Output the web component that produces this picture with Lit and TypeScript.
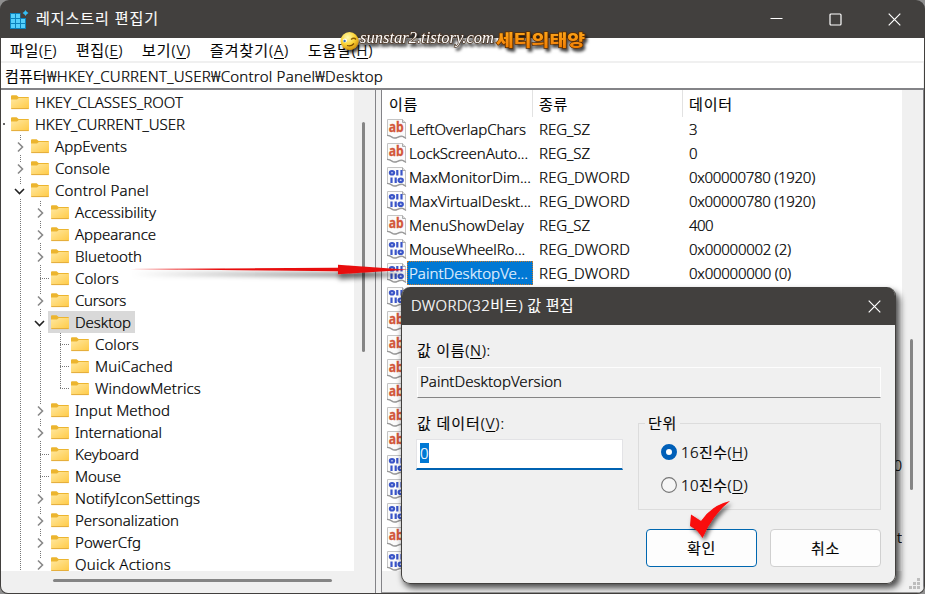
import { LitElement, html, css, svg, nothing } from "lit";
import { customElement } from "lit/decorators.js";

type Node = { name: string; level: number; w: number; state: "closed" | "open" | "leaf"; selected?: boolean };

const tree: Node[] = [
  { name: "HKEY_CLASSES_ROOT", level: 0, w: 148, state: "leaf" },
  { name: "HKEY_CURRENT_USER", level: 0, w: 150, state: "leaf" },
  { name: "AppEvents", level: 1, w: 72, state: "closed" },
  { name: "Console", level: 1, w: 55, state: "closed" },
  { name: "Control Panel", level: 1, w: 94, state: "open" },
  { name: "Accessibility", level: 2, w: 81, state: "closed" },
  { name: "Appearance", level: 2, w: 81, state: "closed" },
  { name: "Bluetooth", level: 2, w: 67, state: "closed" },
  { name: "Colors", level: 2, w: 44, state: "leaf" },
  { name: "Cursors", level: 2, w: 51, state: "closed" },
  { name: "Desktop", level: 2, w: 56, state: "open", selected: true },
  { name: "Colors", level: 3, w: 44, state: "leaf" },
  { name: "MuiCached", level: 3, w: 78, state: "leaf" },
  { name: "WindowMetrics", level: 3, w: 106, state: "leaf" },
  { name: "Input Method", level: 2, w: 95, state: "closed" },
  { name: "International", level: 2, w: 87, state: "closed" },
  { name: "Keyboard", level: 2, w: 64, state: "leaf" },
  { name: "Mouse", level: 2, w: 46, state: "leaf" },
  { name: "NotifyIconSettings", level: 2, w: 125, state: "closed" },
  { name: "Personalization", level: 2, w: 104, state: "closed" },
  { name: "PowerCfg", level: 2, w: 66, state: "closed" },
  { name: "Quick Actions", level: 2, w: 96, state: "closed" },
];

type Value = { name?: string; nw?: number; kind: "sz" | "dword"; data?: string; dw?: number; selected?: boolean; tail?: string };

const values: Value[] = [
  { name: "LeftOverlapChars", nw: 117, kind: "sz", data: "3", dw: 8 },
  { name: "LockScreenAuto...", nw: 119, kind: "sz", data: "0", dw: 8 },
  { name: "MaxMonitorDim...", nw: 122, kind: "dword", data: "0x00000780 (1920)", dw: 126 },
  { name: "MaxVirtualDeskt...", nw: 122, kind: "dword", data: "0x00000780 (1920)", dw: 126 },
  { name: "MenuShowDelay", nw: 115, kind: "sz", data: "400", dw: 24 },
  { name: "MouseWheelRo...", nw: 116, kind: "dword", data: "0x00000002 (2)", dw: 102 },
  { name: "PaintDesktopVe...", nw: 119, kind: "dword", data: "0x00000000 (0)", dw: 102, selected: true },
  { kind: "dword" }, { kind: "sz" }, { kind: "sz" }, { kind: "sz" }, { kind: "sz" }, { kind: "sz" }, { kind: "sz" },
  { kind: "dword", tail: "0" }, { kind: "dword" }, { kind: "dword" }, { kind: "sz", tail: "t" }, { kind: "dword" },
];

const t = (text: string, w: number) => html`<span class="t" data-w=${w}>${text}</span>`;
const key = (text: string, k: string, w: number, end = ")") =>
  html`<span class="t" data-w=${w}>${text}(<u>${k}</u>${end}</span>`;

const folder = html`<svg class="folder" width="18" height="15" viewBox="0 0 18 15">
  <defs><linearGradient id="fg" x1="0" y1="0" x2="1" y2="1"><stop offset="0" stop-color="#ffe8a0"/><stop offset="1" stop-color="#ffca45"/></linearGradient></defs>
  <path d="M0 1.2Q0 .3 1 .3H5.6L7.6 2H17Q18 2 18 3V6H0Z" fill="#ecb52f"/>
  <path d="M0 4.6H6L7.8 3H18V13.2Q18 14 17 14H1Q0 14 0 13.2Z" fill="url(#fg)"/>
  <path d="M0.3 13.6H17.7" stroke="#e3ac3b" stroke-width="1"/></svg>`;

const page = svg`<path d="M.5 .5H15.5L18.5 3.5V19Q15.5 16.500 12.500 18T6.500 18.500L.5 16Z" fill="#fbfbfb" stroke="#c4c4c4"/>
  <path d="M15.500 .5V3.500H18.500" fill="#ddd" stroke="#aaa"/>
  <path d="M0 16.300Q3 16.500 5 18.200T10.500 18.300T15.500 17.300T19 19.400" fill="none" stroke="#999" stroke-width="1.300"/>`;

const icons = {
  sz: html`<svg class="vi" width="20" height="20" viewBox="0 0 20 20">${page}
    <text x="1.800" y="13" textLength="15" lengthAdjust="spacingAndGlyphs" font-family="Noto Sans, sans-serif" font-size="13.500" font-weight="700" fill="#d2573a" stroke="#d2573a" stroke-width=".3">ab</text></svg>`,
  dword: html`<svg class="vi" width="20" height="20" viewBox="0 0 20 20">${page}
    <g fill="none" stroke="#3a55c8" stroke-width="2.200">
      <ellipse cx="5" cy="5.800" rx="2.100" ry="1.700"/><path d="M10.300 3V8.500M14.500 3V8.500"/>
      <path d="M4.500 10.400V16M8.700 10.400V16"/><ellipse cx="13.700" cy="13.200" rx="2.100" ry="1.700"/></g></svg>`,
};

@customElement("app-root")
export class AppRoot extends LitElement {
  static styles = css`
    :host { display: block; width: 925px; height: 594px; overflow: hidden; background: #8f8f8f;
      font: 350 15px/22px "Noto Sans", "Noto Sans CJK KR", sans-serif; color: #000; }
    * { box-sizing: border-box; }
    svg { display: block; flex: none; }
    .t, .tail, .edit span { -webkit-text-stroke: .22px currentColor; }
    .t { white-space: pre; display: inline-block; }
    u { text-decoration: underline; text-underline-offset: 2px; text-decoration-thickness: 1px; }
    .window { position: relative; width: 925px; height: 594px; display: flex; flex-direction: column;
      background: #42403e; border-radius: 9px 9px 8px 8px; overflow: hidden; }
    .title { height: 38px; flex: none; display: flex; align-items: center; color: #fff; padding-left: 9px; }
    .title .t { margin: -2px 0 0 7px; }
    .app-icon { margin-top: 1px; }
    .controls { margin-left: auto; display: flex; gap: 46px; padding-right: 24px; }
    .client { flex: 1; min-height: 0; margin: 0 1px 1px; display: flex; flex-direction: column; background: #f0f0f0;
      border-radius: 0 0 7px 7px; overflow: hidden; }
    .menu { height: 23px; flex: none; background: #fff; display: flex; align-items: center; gap: 19px; padding: 1px 0 0 9px; }
    .address { height: 25px; margin: 2px 1px 0 0; flex: none; background: #fff; padding: 2px 0 0 4px; }
    .panes { flex: 1; min-height: 0; display: flex; border-top: 2px solid #838387; }
    .tree-pane { width: 375px; display: flex; flex-direction: column; border-right: 1px solid #838387; padding-bottom: 1px; }
    .tree-main { height: 481px; display: flex; }
    .tree { width: 353px; height: 481px; overflow: hidden; background: #fff; display: flex; padding-top: 1px; }
    .guides { width: 0; overflow: visible; }
    .nodes { flex: 1; min-width: 0; }
    .node { height: 22px; display: flex; align-items: center; }
    .l0 { padding-left: 7px; } .l1 { padding-left: 27px; } .l2 { padding-left: 47px; } .l3 { padding-left: 67px; }
    .label { display: flex; height: 22px; align-items: center; padding: 0 4px 0 3px; gap: 6px; }
    .label.sel { background: #d9d9d9; }
    .label .folder { margin: 1px 0 0; }
    .vbar { flex: 1; padding: 32px 0 0 8px; }
    .vbar i { display: block; width: 3px; height: 230px; background: #858585; border-radius: 2px; }
    .hbar { padding: 8px 0 0 52px; }
    .hbar i { display: block; width: 279px; height: 3px; background: #858585; border-radius: 2px; }
    .list-pane { flex: 1; margin-left: 5px; border-left: 1px solid #838387; border-right: 1px solid #838387;
      display: flex; border-bottom: 1px solid #9a9a9a; }
    .list { width: 520px; height: 481px; overflow: hidden; background: #fff; }
    .row { display: grid; grid-template-columns: 150px 150px 1fr; height: 24px; line-height: 24px; }
    .row.head { height: 27px; line-height: 28px; }
    .head > span { padding-left: 7px; height: 27px; }
    .head > span + span { border-left: 1px solid #e2e2e2; padding-left: 6px; }
    .name { display: flex; align-items: center; padding-left: 5px; }
    .txt { padding-left: 2px; height: 24px; flex: 1; margin-right: -1px; }
    .txt.sel { background: #0078d4; color: #e6f3ff; outline: 1px dotted #c77a2c; outline-offset: -1px; }
    .type { padding-left: 7px; } .data { padding-left: 7px; }
    .tail { text-align: right; }
    .rbar { flex: 1; padding: 249px 0 0 8px; position: relative; }
    .rbar i { display: block; width: 3px; height: 151px; background: #858585; border-radius: 2px; }
    .grip { position: absolute; right: 2px; bottom: 2px; }

    .dialog { position: absolute; left: 401px; top: 287px; width: 495px; height: 297px; border-radius: 9px;
      background: #f0f0f0; border: 1px solid #42403e; border-top: 0; overflow: hidden; }
    .dlg-shadow { position: absolute; left: 401px; top: 289px; width: 495px; height: 295px; border-radius: 9px;
      box-shadow: 3px 3px 6px 1px #000000b0; }
    .dlg-title { height: 38px; background: #42403e; color: #fff; display: flex; align-items: center; justify-content: space-between; padding: 0 14px 0 9px; }
    .dlg-title .t { margin-top: -2px; }
    .dlg-body { padding: 14px 14px 0 15px; }
    .readonly { height: 31px; margin-top: 6px; border: 1px solid #fdfdfd; border-bottom-color: #858585; padding: 2px 0 0 2px; }
    .cols { display: flex; justify-content: space-between; margin-top: 15px; }
    .edit { width: 207px; height: 31px; margin: 5px 0 0 -1px; background: #fff; border: 1px solid #e3e3e6; border-bottom: 2px solid #0062b1; padding: 3px 0 0 3px; }
    .edit span { display: block; width: 9px; height: 20px; line-height: 20px; background: #0078d4; color: #fff; }
    .group { width: 243px; height: 87px; margin: 10px 0 0; border: 1px solid #dcdcdc; padding: 0 0 0 22px; }
    .legend { display: block; width: 35px; height: 22px; margin: -12px 0 0 -16px; background: #f0f0f0; padding-left: 3px; }
    .radio { display: flex; align-items: center; gap: 4px; height: 22px; margin-top: 7px; }
    .radio .t { margin-top: -1px; }
    .radio + .radio { margin-top: 11px; }
    .buttons { display: flex; justify-content: flex-end; gap: 13px; margin-top: 19px; }
    .edit-label { margin-top: -1px; }
    .btn { width: 111px; height: 38px; border: 1px solid #d0d0d0; border-radius: 4px; background: #fdfdfd; text-align: center; line-height: 36px; }
    .btn.primary { border-color: #0067b0; }

    .arrow { position: absolute; left: 125px; top: 255px; }
    .check { position: absolute; left: 682px; top: 494px; }
    .mark { position: absolute; left: 338px; top: 28px; }
  `;

  firstUpdated() {
    this.renderRoot.querySelectorAll<HTMLElement>(".t").forEach((el) => {
      const n = (el.textContent ?? "").length;
      const natural = el.getBoundingClientRect().width;
      const want = Number(el.dataset.w);
      el.style.letterSpacing = `${((want - natural) / n).toFixed(3)}px`;
    });
  }

  private chevron(x: number, y: number, open: boolean) {
    return svg`<rect x=${x - 6} y=${y - 7} width="12" height="14" fill="#fff"/>
      <path d=${open ? `M${x - 4.5} ${y - 2}L${x} ${y + 2.5}L${x + 4.5} ${y - 2}` : `M${x - 2} ${y - 4.5}L${x + 2.5} ${y}L${x - 2} ${y + 4.5}`}
        fill="none" stroke=${open ? "#222" : "#888"} stroke-width="1.600"/>`;
  }

  private guides() {
    const v = (x: number, a: number, b: number) => svg`<path d=${`M${x}.5 ${a}V${b}`} stroke="#777" stroke-dasharray="1 1"/>`;
    return html`<svg width="80" height="480" viewBox="1 0 80 480">
      ${v(20, 44, 480)}${v(40, 110, 480)}${v(60, 242, 298)}
      <path d="M3 33H5" stroke="#333" stroke-width="1.500"/>
      ${[8, 16, 17].map((r) => svg`<path d=${`M40 ${r * 22 + 11.5}H49`} stroke="#777" stroke-dasharray="1 1"/>`)}
      ${[11, 12, 13].map((r) => svg`<path d=${`M60 ${r * 22 + 11.5}H69`} stroke="#777" stroke-dasharray="1 1"/>`)}
      ${tree.map((n, i) => (n.state === "leaf" ? nothing : this.chevron(n.level * 20 + (n.state === "open" ? -0.5 : 0), i * 22 + 12, n.state === "open")))}
    </svg>`;
  }

  private close() {
    return html`<svg width="13" height="13" viewBox="0 0 13 13"><path d="M.7 .7L12.300 12.300M12.300 .7L.7 12.300" stroke="#fff" stroke-width="1.200"/></svg>`;
  }

  render() {
    return html`<div class="window">
      <div class="title">
        <svg class="app-icon" width="20" height="20" viewBox="0 0 20 20">
          <rect x="1" y="3" width="16" height="16" fill="#0b83bd"/>
          <g fill="#55d0fb"><path d="M2 4h4v4h-4zM7 4h4v4h-4zM2 9h4v4h-4zM7 9h4v4h-4zM12 9h4v4h-4zM2 14h4v4h-4zM7 14h4v4h-4zM12 14h4v4h-4z"/></g>
          <path d="M11.500 2h7v6h-7z" fill="#42403e"/><path d="M16.500 0L17.700 1.800L19.500 3L17.700 4.200L16.500 6L15.300 4.200L13.500 3L15.300 1.800Z" fill="#35bdf2"/>
        </svg>
        ${t("레지스트리 편집기", 123)}
        <div class="controls">
          <svg width="13" height="13" viewBox="0 0 13 13"><path d="M.5 5.500H12.500" stroke="#fff"/></svg>
          <svg width="13" height="13" viewBox="0 0 13 13"><rect x="1" y="1" width="11" height="11" rx="1" fill="none" stroke="#fff" stroke-width="1.200"/></svg>
          ${this.close()}
        </div>
      </div>
      <div class="client">
        <div class="menu">${key("파일", "F", 47)}${key("편집", "E", 47)}${key("보기", "V", 49)}${key("즐겨찾기", "A", 79)}${key("도움말", "H", 65)}</div>
        <div class="address">${t("컴퓨터₩HKEY_CURRENT_USER₩Control Panel₩Desktop", 378)}</div>
        <div class="panes">
          <div class="tree-pane">
            <div class="tree-main">
              <div class="tree"><div class="guides">${this.guides()}</div>
                <div class="nodes">${tree.map((n) => html`<div class="node l${n.level}"><div class="label ${n.selected ? "sel" : ""}">${folder}${t(n.name, n.w)}</div></div>`)}</div>
              </div>
              <div class="vbar"><i></i></div>
            </div>
            <div class="hbar"><i></i></div>
          </div>
          <div class="list-pane">
            <div class="list">
              <div class="row head"><span>${t("이름", 29)}</span><span>${t("종류", 29)}</span><span>${t("데이터", 44)}</span></div>
              ${values.map((v) => html`<div class="row">
                <div class="name">${icons[v.kind]}<div class="txt ${v.selected ? "sel" : ""}">${v.name ? t(v.name, v.nw!) : nothing}</div></div>
                <div class="type">${v.name ? t(v.kind === "sz" ? "REG_SZ" : "REG_DWORD", v.kind === "sz" ? 51 : 91) : nothing}</div>
                ${v.tail ? html`<div class="tail">${v.tail}</div>` : html`<div class="data">${v.data ? t(v.data, v.dw!) : nothing}</div>`}
              </div>`)}
            </div>
            <div class="rbar"><i></i>
              <svg class="grip" width="12" height="12" viewBox="0 0 12 12" fill="#bdbdbd"><path d="M8 0h3v3h-3zM4 4h3v3h-3zM8 4h3v3h-3zM0 8h3v3h-3zM4 8h3v3h-3zM8 8h3v3h-3z"/></svg>
            </div>
          </div>
        </div>
      </div>

      <div class="dlg-shadow"></div>
      <div class="dialog">
        <div class="dlg-title">${t("DWORD(32비트) 값 편집", 163)}${this.close()}</div>
        <div class="dlg-body">
          <div>${key("값 이름", "N", 74, "):")}</div>
          <div class="readonly">${t("PaintDesktopVersion", 142)}</div>
          <div class="cols">
            <div><div class="edit-label">${key("값 데이터", "V", 88, "):")}</div><div class="edit"><span>0</span></div></div>
            <div class="group">
              <span class="legend">${t("단위", 29)}</span>
              <div class="radio"><svg width="16" height="16" viewBox="0 0 16 16"><circle cx="8" cy="8" r="5.500" fill="#fff" stroke="#005fb8" stroke-width="5"/></svg>${key("16진수", "H", 67)}</div>
              <div class="radio"><svg width="16" height="16" viewBox="0 0 16 16"><circle cx="8" cy="8" r="7.400" fill="#f6f6f6" stroke="#757575" stroke-width="1.100"/></svg>${key("10진수", "D", 67)}</div>
            </div>
          </div>
          <div class="buttons"><div class="btn primary">${t("확인", 29)}</div><div class="btn">${t("취소", 29)}</div></div>
        </div>
      </div>

      <svg class="arrow" width="290" height="36" viewBox="125 255 290 36">
        <defs><filter id="sh" x="-10%" y="-80%" width="120%" height="400%"><feDropShadow dx="1" dy="5" stdDeviation="2.500" flood-color="#000" flood-opacity=".6"/></filter></defs>
        <path d="M130 269L338 267.700V264.800L408 269.800L338 274.300V271.300Z" fill="#e80d0d" filter="url(#sh)"/>
      </svg>
      <svg class="check" width="56" height="50" viewBox="682 494 56 50">
        <defs><filter id="sc" x="-20%" y="-20%" width="150%" height="150%"><feDropShadow dx="2" dy="3" stdDeviation="2" flood-color="#000" flood-opacity=".6"/></filter></defs>
        <path d="M691 514.500L701 521Q712 505 730 501Q713 514 702.500 538Q697 529 690 526Z" fill="#f90808" filter="url(#sc)"/>
      </svg>
      <svg class="mark" width="262" height="34" viewBox="338 28 262 34">
        <defs>
          <radialGradient id="face" cx=".4" cy=".3" r=".8"><stop offset="0" stop-color="#fffbb0"/><stop offset=".5" stop-color="#fbd437"/><stop offset="1" stop-color="#c98000"/></radialGradient>
          <linearGradient id="or" x1="0" y1="0" x2="0" y2="1"><stop offset="0" stop-color="#ffb01e"/><stop offset="1" stop-color="#f07800"/></linearGradient>
          <filter id="ms" x="-10%" y="-30%" width="120%" height="190%"><feDropShadow dx="2" dy="3" stdDeviation="1.600" flood-color="#000" flood-opacity=".75"/></filter>
        </defs>
        <g filter="url(#ms)">
          <circle cx="349.500" cy="41" r="9" fill="url(#face)"/>
          <path d="M351 39.500Q354 37 356 39.500" fill="none" stroke="#8a5a00" stroke-width="1.300"/>
          <circle cx="345" cy="40.500" r="2" fill="#fff"/><circle cx="344.600" cy="41" r="1.200" fill="#3d76b5"/><path d="M347 45.500Q351 47 354 43.500" fill="none" stroke="#7b4b00" stroke-width="1.200"/>
          <text x="360" y="43" textLength="134" lengthAdjust="spacingAndGlyphs" font-family="Liberation Serif, serif" font-style="italic" font-weight="400" font-size="17" fill="#fff" stroke="#4a3626" stroke-width="1.600" paint-order="stroke">sunstar2.tistory.com</text>
          <text x="496" y="45.500" textLength="89" lengthAdjust="spacingAndGlyphs" font-family="Noto Sans CJK KR, sans-serif" font-weight="900" font-size="16" fill="url(#or)" stroke="#5a2c00" stroke-width="1.400" paint-order="stroke">세티의태양</text>
        </g>
      </svg>
    </div>`;
  }
}
